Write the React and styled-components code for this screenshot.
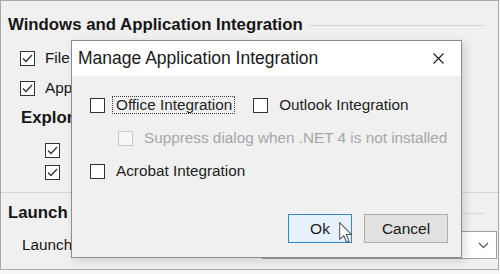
import styled, { createGlobalStyle } from "styled-components";

const GlobalStyle = createGlobalStyle`
  html, body {
    margin: 0;
    background: #f7f7f7;
  }
  body {
    font-family: "Liberation Sans", Arial, sans-serif;
  }
`;

const Screen = styled.div`
  position: relative;
  width: 499px;
  height: 270px;
  box-sizing: border-box;
  border: 1px solid #a9a9a9;
  background: #f0f0f0;
  overflow: hidden;
  color: #161616;
`;

const Row = styled.div`
  display: flex;
  align-items: center;
  gap: ${(p) => p.$gap ?? 10}px;
  height: ${(p) => p.$h ?? 20}px;
  margin-top: ${(p) => p.$top ?? 0}px;
  padding-left: ${(p) => p.$indent ?? 0}px;
`;

const Heading = styled.div`
  font-weight: 700;
  font-size: 16.8px;
  white-space: nowrap;
`;

const Rule = styled.div`
  flex: 1;
  height: 1px;
  background: #d6d6d6;
  margin-right: 14px;
`;

const Separator = styled.div`
  height: 1px;
  background: #d4d4d4;
  margin-top: 10px;
`;

const Text = styled.span`
  font-size: 15.3px;
  white-space: nowrap;
`;

const LaunchRow = styled(Row)`
  justify-content: space-between;
  padding-right: 1px;
`;

const Dropdown = styled.div`
  width: 235px;
  height: 28px;
  box-sizing: border-box;
  border: 1px solid #9e9e9e;
  background: #fff;
  display: flex;
  align-items: center;
  justify-content: flex-end;
  padding-right: 7px;
`;

const Box = styled.span`
  display: inline-flex;
  align-items: center;
  justify-content: center;
  flex: none;
  width: 15px;
  height: 15px;
  box-sizing: border-box;
  border: 1px solid ${(p) => (p.$disabled ? "#c9c9c9" : "#333")};
  background: ${(p) => (p.$disabled ? "#f6f6f6" : "#fff")};
`;

const Dialog = styled.div`
  position: absolute;
  left: 70px;
  top: 39px;
  width: 391px;
  height: 218px;
  box-sizing: border-box;
  border: 1px solid #8c8c8c;
  background: #f0f0f0;
  box-shadow: 3px 3px 9px rgba(0, 0, 0, 0.14);
  display: flex;
  flex-direction: column;
`;

const TitleBar = styled.div`
  height: 35px;
  flex: none;
  background: #fff;
  display: flex;
  align-items: center;
  padding-left: 6px;
`;

const Title = styled.span`
  flex: 1;
  font-size: 17.5px;
  color: #1a1a1a;
  white-space: nowrap;
`;

const CloseButton = styled.div`
  width: 46px;
  height: 100%;
  display: flex;
  align-items: center;
  justify-content: center;
`;

const Body = styled.div`
  flex: 1;
  display: flex;
  flex-direction: column;
  padding: 20px 13px 14px 18px;
`;

const OptionRow = styled.div`
  display: flex;
  align-items: center;
  gap: 18px;
  height: 18px;
  margin-top: ${(p) => p.$top ?? 0}px;
  padding-left: ${(p) => p.$indent ?? 0}px;
`;

const Option = styled.label`
  display: flex;
  align-items: center;
`;

const OptionText = styled.span`
  margin-left: 7px;
  padding: 0 2px 0 3px;
  line-height: 16px;
  font-size: 15.3px;
  white-space: nowrap;
  border: 1px dotted ${(p) => (p.$focus ? "#3a3a3a" : "transparent")};
  color: ${(p) => (p.$disabled ? "#a6a6a6" : "#1e1e1e")};
`;

const Buttons = styled.div`
  margin-top: auto;
  display: flex;
  justify-content: flex-end;
  gap: 12px;
`;

const Button = styled.div`
  width: ${(p) => p.$w}px;
  height: 29px;
  box-sizing: border-box;
  display: flex;
  align-items: center;
  justify-content: center;
  font-size: 15.5px;
  color: #1b1b1b;
  border: 1px solid ${(p) => (p.$primary ? "#2f86d6" : "#adadad")};
  background: ${(p) => (p.$primary ? "#e6f1fb" : "#e1e1e1")};
`;

const Cursor = styled.svg`
  position: absolute;
  left: 338px;
  top: 221px;
`;

const Check = ({ checked, disabled }) => (
  <Box $disabled={disabled}>
    {checked && (
      <svg width="13" height="13" viewBox="0 0 13 13">
        <polyline points="2,6.5 5,9.5 11,3" fill="none" stroke="#333" strokeWidth="1.3" />
      </svg>
    )}
  </Box>
);

const Choice = ({ label, focus, disabled }) => (
  <Option>
    <Check disabled={disabled} />
    <OptionText $focus={focus} $disabled={disabled}>
      {label}
    </OptionText>
  </Option>
);

export default function App() {
  return (
    <>
      <GlobalStyle />
      <Screen>
        <Row $top={14} $indent={7} $gap={6}>
          <Heading>Windows and Application Integration</Heading>
          <Rule />
        </Row>
        <Row $top={13} $indent={19}>
          <Check checked />
          <Text>File type associations</Text>
        </Row>
        <Row $top={10} $indent={19}>
          <Check checked />
          <Text>Application shortcuts</Text>
        </Row>
        <Row $top={10} $indent={20}>
          <Heading>Explorer Integration</Heading>
        </Row>
        <Row $top={12} $indent={44} $gap={20}>
          <Check checked />
          <Text>Context menu</Text>
        </Row>
        <Row $top={2} $indent={44} $gap={20}>
          <Check checked />
          <Text>Preview handler</Text>
        </Row>
        <Separator />
        <Row $top={10} $indent={7} $gap={6}>
          <Heading>Launch</Heading>
          <Rule />
        </Row>
        <LaunchRow $top={8} $indent={21} $h={28}>
          <Text>Launch behavior</Text>
          <Dropdown>
            <svg width="11" height="7" viewBox="0 0 11 7">
              <polyline points="1,1 5.5,5.5 10,1" fill="none" stroke="#5e5e5e" strokeWidth="1.3" />
            </svg>
          </Dropdown>
        </LaunchRow>

        <Dialog>
          <TitleBar>
            <Title>Manage Application Integration</Title>
            <CloseButton>
              <svg width="11" height="11" viewBox="0 0 11 11">
                <path d="M0.5 0.5 L10.5 10.5 M10.5 0.5 L0.5 10.5" stroke="#1a1a1a" strokeWidth="1.1" />
              </svg>
            </CloseButton>
          </TitleBar>
          <Body>
            <OptionRow>
              <Choice label="Office Integration" focus />
              <Choice label="Outlook Integration" />
            </OptionRow>
            <OptionRow $top={15} $indent={28}>
              <Choice label="Suppress dialog when .NET 4 is not installed" disabled />
            </OptionRow>
            <OptionRow $top={15}>
              <Choice label="Acrobat Integration" />
            </OptionRow>
            <Buttons>
              <Button $w={64} $primary>
                Ok
              </Button>
              <Button $w={84}>Cancel</Button>
            </Buttons>
          </Body>
        </Dialog>

        <Cursor width="14" height="22" viewBox="0 0 13 21">
          <path
            d="M0.5 0.5 L0.5 16.5 L4.3 12.9 L7 19.3 L9.3 18.3 L6.7 12 L11.8 12 Z"
            fill="#fff"
            stroke="#555"
            strokeWidth="1"
            strokeLinejoin="round"
          />
        </Cursor>
      </Screen>
    </>
  );
}
